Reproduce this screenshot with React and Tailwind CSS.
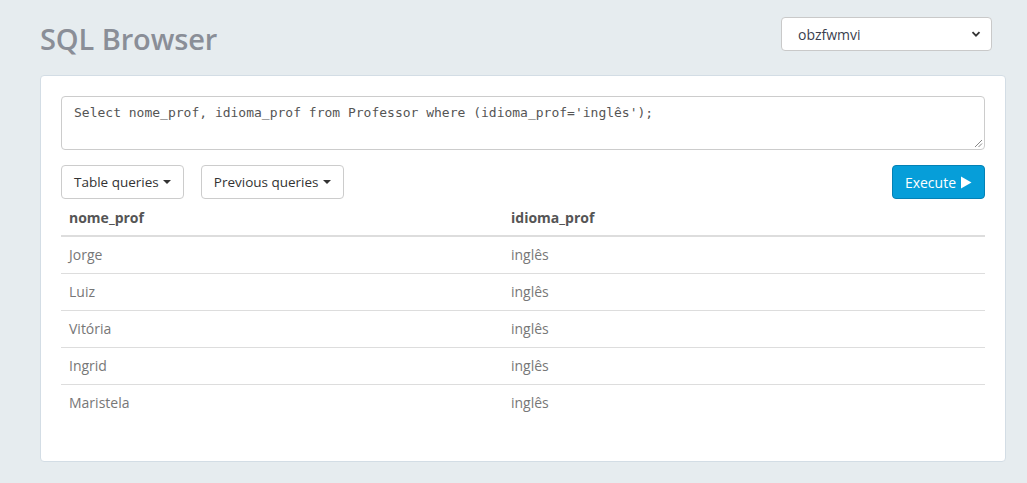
import React from "react";

const rows = ["Jorge", "Luiz", "Vitória", "Ingrid", "Maristela"];

function Caret() {
  return (
    <span className="ml-[4px] inline-block h-0 w-0 border-x-[4px] border-t-[4px] border-x-transparent border-t-[#333] align-middle" />
  );
}

export default function App() {
  return (
    <div
      className="min-h-[483px] w-full bg-[#e6ecef] text-[14px] text-[#555]"
      style={{ fontFamily: '"Open Sans", "Noto Sans", sans-serif' }}
    >
      <div className="flex items-start justify-between pl-[40px] pr-[35px] pt-[17px]">
        <h1 className="mt-[2px] text-[29px] font-semibold leading-[40px] tracking-[-0.1px] text-[#8a8e97]">
          SQL Browser
        </h1>
        <div className="flex h-[34px] w-[211px] items-center justify-between rounded-[4px] border border-[#c9c9c9] bg-white pl-[16px] pr-[9px] text-[14px] text-[#3b3f4f]">
          <span>obzfwmvi</span>
          <svg width="12" height="12" viewBox="0 0 12 12">
            <path d="M2.5 4.2 L6 7.7 L9.5 4.2" fill="none" stroke="#333" strokeWidth="1.8" />
          </svg>
        </div>
      </div>
      <div className="ml-[40px] mr-[21px] mt-[16px] rounded-[4px] border border-[#d3dde5] bg-white px-[20px] pb-[40px] pt-[20px]">
        <div className="relative h-[54px] rounded-[4px] border border-[#cccccc] px-[12px] pt-[6px] text-[13px] text-[#555]"
          style={{ fontFamily: '"DejaVu Sans Mono", monospace' }}>
          Select nome_prof, idioma_prof from Professor where (idioma_prof='inglês');
          <svg className="absolute bottom-[1px] right-[1px]" width="9" height="9" viewBox="0 0 9 9">
            <path d="M8 1 L1 8 M8 4.5 L4.5 8" stroke="#888" strokeWidth="1" />
          </svg>
        </div>
        <div className="mt-[15px] flex items-center">
          <button className="flex h-[34px] items-center rounded-[4px] border border-[#cccccc] bg-white px-[12px] text-[13.5px] text-[#333]">
            Table queries
            <Caret />
          </button>
          <button className="ml-[17px] flex h-[34px] items-center rounded-[4px] border border-[#cccccc] bg-white px-[12px] text-[13.5px] text-[#333]">
            Previous queries
            <Caret />
          </button>
          <button className="ml-auto flex h-[34px] items-center rounded-[4px] border border-[#0381b5] bg-[#069ed9] px-[12px] text-[14px] text-white">
            Execute
            <svg className="ml-[4px]" width="12" height="13" viewBox="0 0 12 13">
              <path d="M1 0.5 L11.5 6.5 L1 12.5 Z" fill="#fff" />
            </svg>
          </button>
        </div>
        <table className="mt-[6px] w-full border-collapse text-left text-[14px]">
          <thead>
            <tr className="border-b-2 border-[#dddddd]">
              <th className="h-[31px] w-[442px] px-[8px] pb-[6px] font-bold text-[#555]">nome_prof</th>
              <th className="h-[31px] px-[8px] pb-[6px] font-bold text-[#555]">idioma_prof</th>
            </tr>
          </thead>
          <tbody>
            {rows.map((n, i) => (
              <tr key={n} className={i > 0 ? "border-t border-[#dddddd]" : ""}>
                <td className="h-[37px] px-[8px] text-[#777]">{n}</td>
                <td className="h-[37px] px-[8px] text-[#777]">inglês</td>
              </tr>
            ))}
          </tbody>
        </table>
      </div>
    </div>
  );
}
